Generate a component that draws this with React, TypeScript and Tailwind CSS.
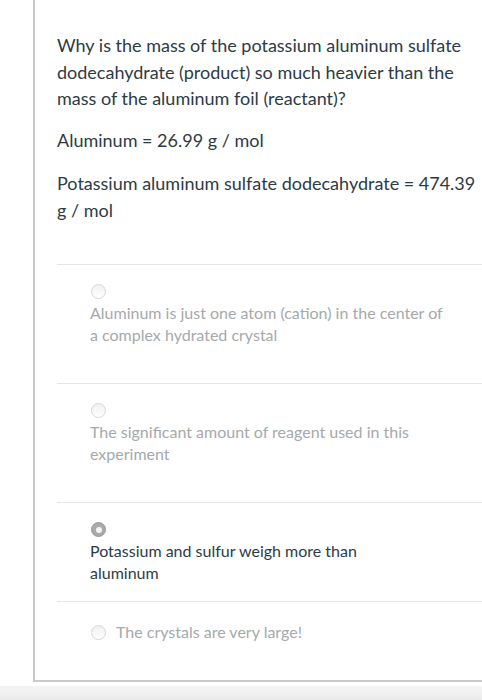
import type React from "react"

interface Choice {
  text: React.ReactNode
  selected?: boolean
  inline?: boolean
  pad: string
}

const choices: Choice[] = [
  { text: "Aluminum is just one atom (cation) in the center of a complex hydrated crystal", pad: "pt-[19px] pb-[37px]" },
  { text: "The significant amount of reagent used in this experiment", pad: "pt-[19px] pb-[37px]" },
  {
    text: (
      <>
        Potassium and sulfur weigh more than
        <br />
        aluminum
      </>
    ),
    selected: true,
    pad: "pt-[19px] pb-[17px]",
  },
  { text: "The crystals are very large!", inline: true, pad: "pt-[19px] pb-[37px]" },
]

const Radio: React.FC<{ selected?: boolean }> = ({ selected }) => (
  <span
    className={`flex h-[15px] w-[15px] shrink-0 items-center justify-center rounded-full border ${
      selected ? "border-[#9a9a9a] bg-[#a9a9a9]" : "border-[#d6d6d6] bg-gradient-to-b from-[#f0f0f0] to-white"
    }`}
  >
    {selected && <span className="h-[6px] w-[6px] rounded-full bg-[#f4f4f4]" />}
  </span>
)

const App: React.FC = () => {
  return (
    <div className="relative h-[700px] w-[482px] overflow-hidden bg-white font-['Lato','Noto_Sans',sans-serif]">
      <div className="ml-[33px] w-[470px] border-b-2 border-l-2 border-[#c9c9c9] pl-[22px] pt-[32px]">
        <div className="w-[428px] text-[18px] leading-[26.5px] text-[#2d3b45]">
          <p>Why is the mass of the potassium aluminum sulfate dodecahydrate (product) so much heavier than the mass of the aluminum foil (reactant)?</p>
          <p className="mt-[15px]">Aluminum = 26.99 g / mol</p>
          <p className="mt-[17px]">Potassium aluminum sulfate dodecahydrate = 474.39 g / mol</p>
        </div>

        <div className="mt-[41px]">
          {choices.map((c, i) => (
            <div key={i} className={`border-t border-[#e6e6e6] pl-[34px] ${c.pad}`}>
              {c.inline ? (
                <div className="flex items-center gap-[10px] text-[16px] leading-[22px] text-[#a5a9ac]">
                  <Radio />
                  <span>{c.text}</span>
                </div>
              ) : (
                <>
                  <Radio selected={c.selected} />
                  <p
                    className={`-ml-[1px] mt-[3px] w-[362px] text-[16px] leading-[22px] ${
                      c.selected ? "text-[#2d3b45]" : "text-[#a5a9ac]"
                    }`}
                  >
                    {c.text}
                  </p>
                </>
              )}
            </div>
          ))}
        </div>
      </div>
      <div className="mt-[4px] h-[17px] bg-gradient-to-b from-[#f4f4f4] to-[#e9e9e9]" />
    </div>
  )
}

export default App
